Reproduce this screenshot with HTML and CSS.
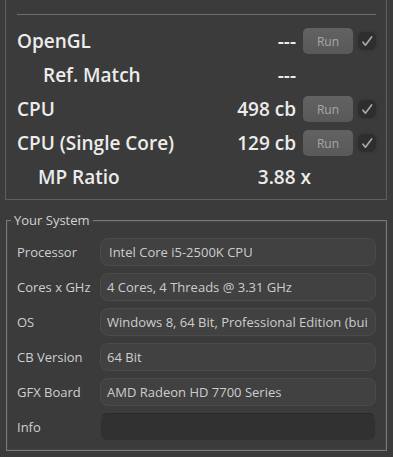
FILE: index.html
```html
<!DOCTYPE html>
<html lang="en">
<head>
    <meta charset="UTF-8">
    <meta name="viewport" content="width=device-width, initial-scale=1.0">
    <title>CINEBENCH</title>
    <link rel="stylesheet" href="styles.css">
</head>
<body>
    <div class="bench">
        <div class="bench-sep"></div>

        <div class="bench-row">
            <span class="bench-name">OpenGL</span>
            <span class="bench-value">---</span>
            <button class="run-btn">Run</button>
            <span class="check">
                <svg viewBox="0 0 18 18"><path d="M5 10.2 L7.4 13.2 L13.6 5"/></svg>
            </span>
        </div>

        <div class="bench-row">
            <span class="bench-name ref">Ref. Match</span>
            <span class="bench-value">---</span>
            <span class="spacer"></span>
        </div>

        <div class="bench-row">
            <span class="bench-name">CPU</span>
            <span class="bench-value">498 cb</span>
            <button class="run-btn">Run</button>
            <span class="check">
                <svg viewBox="0 0 18 18"><path d="M5 10.2 L7.4 13.2 L13.6 5"/></svg>
            </span>
        </div>

        <div class="bench-row">
            <span class="bench-name">CPU (Single Core)</span>
            <span class="bench-value">129 cb</span>
            <button class="run-btn">Run</button>
            <span class="check">
                <svg viewBox="0 0 18 18"><path d="M5 10.2 L7.4 13.2 L13.6 5"/></svg>
            </span>
        </div>

        <div class="bench-row">
            <span class="bench-name ratio">MP Ratio</span>
            <span class="bench-value">3.88 x</span>
            <span class="spacer short"></span>
        </div>
    </div>

    <fieldset class="system">
        <legend>Your System</legend>
        <div class="sys-grid">
            <span class="sys-label">Processor</span>
            <div class="sys-field cpu">Intel Core i5-2500K CPU</div>

            <span class="sys-label">Cores x GHz</span>
            <div class="sys-field">4 Cores, 4 Threads @ 3.31 GHz</div>

            <span class="sys-label">OS</span>
            <div class="sys-field">Windows 8, 64 Bit, Professional Edition (bui</div>

            <span class="sys-label">CB Version</span>
            <div class="sys-field">64 Bit</div>

            <span class="sys-label">GFX Board</span>
            <div class="sys-field">AMD Radeon HD 7700 Series</div>

            <span class="sys-label">Info</span>
            <div class="sys-field empty"></div>
        </div>
    </fieldset>
</body>
</html>
```

FILE: styles.css
```css
body {
    margin: 0;
    padding: 0;
    background-color: #3b3b3b;
    font-family: "Open Sans", "Noto Sans", sans-serif;
    color: #cfcfcf;
    height: 457px;
    overflow: hidden;
}

.bench {
    margin: 0 6px 0 5px;
    padding: 14px 10px 5px 11px;
    border: 1px solid #5e5e5e;
    border-top: none;
}

.bench-sep {
    height: 1px;
    background-color: #6e6e6e;
    margin-bottom: 9px;
}

.bench-row {
    display: flex;
    align-items: center;
    height: 34px;
    font-size: 19px;
    font-weight: 600;
    color: #ececec;
}

.bench-name {
    flex: 1;
    white-space: nowrap;
}

.bench-name.ref {
    padding-left: 26px;
}

.bench-name.ratio {
    padding-left: 21px;
}

.bench-value {
    white-space: nowrap;
}

.run-btn {
    width: 50px;
    height: 26px;
    margin-left: 7px;
    border: none;
    border-radius: 5px;
    background: linear-gradient(#626262, #595959);
    color: #a3a8ad;
    font-family: "Open Sans", "Noto Sans", sans-serif;
    font-size: 12px;
    padding: 0;
}

.check {
    width: 18px;
    height: 18px;
    margin-left: 5px;
    border-radius: 6px;
    background-color: #2e2e2e;
    box-shadow: 0 0 3px #2e2e2e;
    display: flex;
}

.check svg {
    width: 18px;
    height: 18px;
    fill: none;
    stroke: #a9a9a9;
    stroke-width: 1.7;
    stroke-linecap: round;
    stroke-linejoin: round;
}

.spacer {
    width: 80px;
}

.spacer.short {
    width: 65px;
}

.system {
    margin: 12px 6px 0 6px;
    padding: 10px 10px 9px 10px;
    border: 1px solid #7a7a7a;
    box-shadow: inset 0 0 0 1px #444;
    min-width: 0;
}

.system legend {
    font-size: 13px;
    line-height: 16px;
    color: #d2d2d2;
    padding: 0 3px;
    margin-left: -6px;
}

.sys-grid {
    display: grid;
    grid-template-columns: 83px 1fr;
    row-gap: 7px;
    align-items: center;
}

.sys-label {
    font-size: 13px;
    color: #cfcfcf;
    white-space: nowrap;
}

.sys-field {
    height: 26px;
    line-height: 26px;
    padding: 0 6px;
    border: 1px solid #4b4b4b;
    border-radius: 8px;
    background-color: #414141;
    font-size: 13px;
    color: #cdcdcd;
    white-space: nowrap;
    overflow: hidden;
}

.sys-field.cpu {
    padding-left: 8px;
}

.sys-field.empty {
    background-color: #313131;
    border-color: #3a3a3a;
    border-top-color: #2a2a2a;
}
```
